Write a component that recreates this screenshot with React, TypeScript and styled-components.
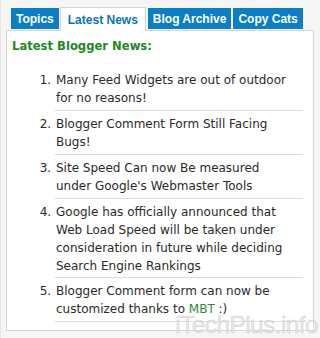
import styled, { createGlobalStyle } from 'styled-components';

const GlobalStyle = createGlobalStyle`
  html, body {
    margin: 0;
    padding: 0;
    background: #f6f6f6;
  }
`;

interface NewsItem {
  text: string;
  link?: string;
  after?: string;
}

const Page = styled.div`
  position: relative;
  width: 320px;
  height: 338px;
  box-sizing: border-box;
  padding: 7px 7px 0 5px;
  background: #f6f6f6;
  border-left: 1px solid #e6e6e6;
  overflow: hidden;
`;

const TabBar = styled.div`
  display: flex;
  align-items: flex-end;
  gap: 2px;
  padding-left: 5px;
  height: 23px;
  position: relative;
  z-index: 1;
`;

const Tab = styled.div<{ $active?: boolean }>`
  box-sizing: border-box;
  height: ${({ $active }) => ($active ? '24px' : '21px')};
  margin: ${({ $active }) => ($active ? '0 0 -1px -1px' : '0 0 1px 0')};
  padding: ${({ $active }) => ($active ? '0 7px' : '0 5px')};
  display: flex;
  align-items: center;
  font-family: 'Liberation Sans', Arial, sans-serif;
  font-weight: bold;
  font-size: 12px;
  color: ${({ $active }) => ($active ? '#0a73b8' : '#ffffff')};
  background: ${({ $active }) => ($active ? '#ffffff' : '#0a7fc8')};
  border: ${({ $active }) => ($active ? '1px solid #d6d6d6' : 'none')};
  border-bottom: none;
`;

const Panel = styled.div`
  box-sizing: border-box;
  width: 308px;
  height: 301px;
  background: #ffffff;
  border: 1px solid #d6d6d6;
  padding: 8px 10px 0 5px;
`;

const Heading = styled.h3`
  margin: 0 0 14px;
  font-family: 'DejaVu Sans', Verdana, sans-serif;
  font-size: 11.6px;
  font-weight: bold;
  color: #1d8a1d;
  line-height: 14px;
`;

const List = styled.ol`
  margin: 0;
  padding: 0 0 0 43px;
  font-family: 'DejaVu Sans', Verdana, sans-serif;
  font-size: 12px;
  line-height: 18px;
  color: #2a2a2a;
`;

const Item = styled.li`
  padding: 4px 6px 3px 1px;
  border-bottom: 1px solid #dcdcdc;

  &:nth-child(4) {
    padding-bottom: 2px;
  }
`;

const Link = styled.a`
  color: #2e8b2e;
  text-decoration: none;
`;

const Watermark = styled.div`
  position: absolute;
  right: 2px;
  bottom: 1px;
  font-family: 'Liberation Sans', Arial, sans-serif;
  font-size: 24.5px;
  line-height: 1;
  letter-spacing: -0.6px;
  color: rgba(228, 228, 228, 0.85);
  -webkit-text-stroke: 0.5px rgba(190, 190, 190, 0.6);
  pointer-events: none;
`;

const news: NewsItem[] = [
  { text: 'Many Feed Widgets are out of outdoor for no reasons!' },
  { text: 'Blogger Comment Form Still Facing Bugs!' },
  { text: "Site Speed Can now Be measured under Google's Webmaster Tools" },
  {
    text: 'Google has officially announced that Web Load Speed will be taken under consideration in future while deciding Search Engine Rankings',
  },
  { text: 'Blogger Comment form can now be customized thanks to ', link: 'MBT', after: ' :)' },
];

const tabs = ['Topics', 'Latest News', 'Blog Archive', 'Copy Cats'];

const App = () => {
  return (
    <>
      <GlobalStyle />
      <Page>
        <TabBar>
          {tabs.map((t) => (
            <Tab key={t} $active={t === 'Latest News'}>
              {t}
            </Tab>
          ))}
        </TabBar>
        <Panel>
          <Heading>Latest Blogger News:</Heading>
          <List>
            {news.map((n, i) => (
              <Item key={i}>
                {n.text}
                {n.link && <Link href="#">{n.link}</Link>}
                {n.after}
              </Item>
            ))}
          </List>
        </Panel>
        <Watermark>iTechPlus.info</Watermark>
      </Page>
    </>
  );
};

export default App;
